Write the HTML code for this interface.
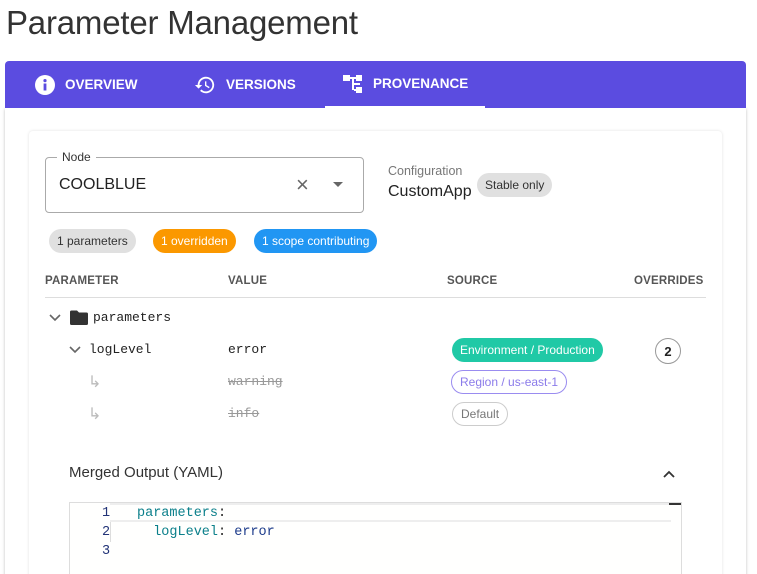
<!DOCTYPE html>
<html style="height:574px;overflow:hidden"><head><meta charset="utf-8"><style>
*{box-sizing:border-box;margin:0;padding:0}
body{width:757px;height:574px;overflow:hidden;background:#fff;font-family:"Liberation Sans",Roboto,sans-serif;color:#222;position:relative}
.abs{position:absolute}
h1{position:absolute;left:6px;top:4px;font-size:33px;font-weight:400;color:#333;letter-spacing:-0.2px}
.tabs{left:5px;top:61px;width:741px;height:47px;background:#5b4ce0;border-radius:4px 4px 0 0}
.tab{position:absolute;top:0;height:47px;color:#fff;font-weight:700;font-size:13.5px;display:flex;align-items:center;gap:10px}
.outer{left:5px;top:108px;width:741px;height:480px;box-shadow:0 1px 3px rgba(0,0,0,.25);background:#fff}
.inner{left:29px;top:131px;width:693px;height:460px;background:#fff;border-radius:4px;box-shadow:0 0 3px rgba(0,0,0,.12)}
.chip{position:absolute;height:24px;border-radius:12px;font-size:12px;display:flex;align-items:center;padding:0 8px;white-space:nowrap}
.th{position:absolute;top:275px;font-size:11.5px;font-weight:700;color:#555;letter-spacing:.2px}
.mono{font-family:"Liberation Mono",monospace;font-size:13px}
</style></head><body>
<h1>Parameter Management</h1>
<div class="abs outer"></div>
<div class="abs tabs">
 <div class="tab" style="left:30px"><svg width="20" height="20" viewBox="0 0 20 20"><circle cx="10" cy="10" r="10" fill="#fff"/><rect x="8.6" y="8.5" width="2.8" height="7" fill="#5b4ce0"/><circle cx="10" cy="5.6" r="1.6" fill="#5b4ce0"/></svg>OVERVIEW</div>
 <div class="tab" style="left:189px"><svg width="22" height="22" viewBox="0 0 24 24"><path d="M13 3a9 9 0 0 0-9 9H1l4 4 4-4H6a7 7 0 1 1 2.050 4.95l-1.42 1.42A9 9 0 1 0 13 3zm-1 5v5l4.25 2.52.77-1.28-3.52-2.09V8z" fill="#fff"/></svg>VERSIONS</div>
 <div class="tab" style="left:320px;width:160px;padding-left:18px;border-bottom:2px solid #fff"><svg width="20" height="20" viewBox="0 0 20 20" fill="#fff"><rect x="0" y="1" width="7" height="6"/><rect x="7" y="3" width="6" height="2"/><rect x="9" y="3" width="2" height="13"/><rect x="13" y="1" width="6" height="6"/><rect x="11" y="9" width="6" height="2"/><rect x="13" y="13" width="6" height="6"/><rect x="11" y="15" width="2" height="2"/></svg>PROVENANCE</div>
</div>
<div class="abs inner"></div>
<div class="abs" style="left:45px;top:157px;width:319px;height:56px;border:1px solid #aaa;border-radius:4px"></div>
<div class="abs" style="left:57px;top:150px;background:#fff;padding:0 5px;font-size:12px;color:#333">Node</div>
<div class="abs" style="left:59px;top:176px;font-size:16px;color:#222">COOLBLUE</div>
<div class="abs" style="left:296px;top:171px;font-size:22px;color:#666;line-height:28px">×</div>
<div class="abs" style="left:333px;top:182px;width:0;height:0;border-left:5px solid transparent;border-right:5px solid transparent;border-top:5px solid #666"></div>
<div class="abs" style="left:388px;top:164px;font-size:12.5px;color:#777">Configuration</div>
<div class="abs" style="left:388px;top:183px;font-size:16px;color:#222">CustomApp</div>
<div class="chip" style="left:477px;top:173px;background:#e0e0e0;color:#333">Stable only</div>
<div class="chip" style="left:49px;top:229px;background:#e0e0e0;color:#333">1 parameters</div>
<div class="chip" style="left:153px;top:229px;background:#fb9800;color:#fff">1 overridden</div>
<div class="chip" style="left:254px;top:229px;background:#2196f3;color:#fff">1 scope contributing</div>
<div class="th" style="left:45px">PARAMETER</div>
<div class="th" style="left:228px">VALUE</div>
<div class="th" style="left:447px">SOURCE</div>
<div class="th" style="left:634px">OVERRIDES</div>
<div class="abs" style="left:45px;top:297px;width:661px;height:1px;background:#ddd"></div>
<svg class="abs" style="left:48px;top:312px" width="14" height="12" viewBox="0 0 14 12"><path d="M2 3l5 5 5-5" stroke="#666" stroke-width="1.6" fill="none"/></svg>
<svg class="abs" style="left:70px;top:310px" width="18" height="15" viewBox="0 0 18 15"><path d="M0 2a1.5 1.5 0 0 1 1.5-1.5H7l2 2h7.5A1.5 1.5 0 0 1 18 4v9.5a1.5 1.5 0 0 1-1.5 1.5h-15A1.5 1.5 0 0 1 0 13.5z" fill="#333"/></svg>
<div class="abs mono" style="left:93px;top:310px;color:#222">parameters</div>
<svg class="abs" style="left:68px;top:344px" width="14" height="12" viewBox="0 0 14 12"><path d="M2 3l5 5 5-5" stroke="#666" stroke-width="1.6" fill="none"/></svg>
<div class="abs mono" style="left:89px;top:342px">logLevel</div>
<div class="abs mono" style="left:228px;top:342px">error</div>
<div class="chip" style="left:452px;top:338px;background:#20c9a6;color:#fff">Environment / Production</div>
<div class="abs" style="left:655px;top:338px;width:26px;height:26px;border:1px solid #999;border-radius:50%;font-size:13px;font-weight:700;display:flex;align-items:center;justify-content:center">2</div>
<div class="abs" style="left:88px;top:372px;color:#bbb;font-size:16px">↳</div>
<div class="abs mono" style="left:228px;top:374px;color:#999;text-decoration:line-through">warning</div>
<div class="chip" style="left:451px;top:370px;border:1px solid #9a8cf0;color:#8b7bea">Region / us-east-1</div>
<div class="abs" style="left:88px;top:404px;color:#bbb;font-size:16px">↳</div>
<div class="abs mono" style="left:228px;top:406px;color:#999;text-decoration:line-through">info</div>
<div class="chip" style="left:452px;top:402px;border:1px solid #ccc;color:#777">Default</div>
<div class="abs" style="left:69px;top:464px;font-size:15px;color:#333">Merged Output (YAML)</div>
<svg class="abs" style="left:662px;top:468px" width="14" height="12" viewBox="0 0 14 12"><path d="M2 9l5-5 5 5" stroke="#333" stroke-width="1.8" fill="none"/></svg>
<div class="abs" style="left:69px;top:502px;width:613px;height:90px;border:1px solid #ddd;background:#fffffe"></div>
<div class="abs" style="left:110px;top:503px;width:561px;height:19px;border:2px solid #eee;border-right:none;border-left:none"></div>
<div class="abs" style="left:669px;top:503px;width:12px;height:2px;background:#333"></div>
<div class="abs" style="left:110px;top:522px;width:1px;height:20px;background:#ddd"></div>
<div class="abs mono" style="left:102px;top:504px;color:#237;line-height:19px;font-size:13.5px">1<br>2<br>3</div>
<div class="abs mono" style="left:137px;top:504px;line-height:19px;font-size:13.5px"><span style="color:#0a7f8a">parameters</span>:<br>&nbsp;&nbsp;<span style="color:#0a7f8a">logLevel</span>: <span style="color:#1b3a8a">error</span></div>
</body></html>
